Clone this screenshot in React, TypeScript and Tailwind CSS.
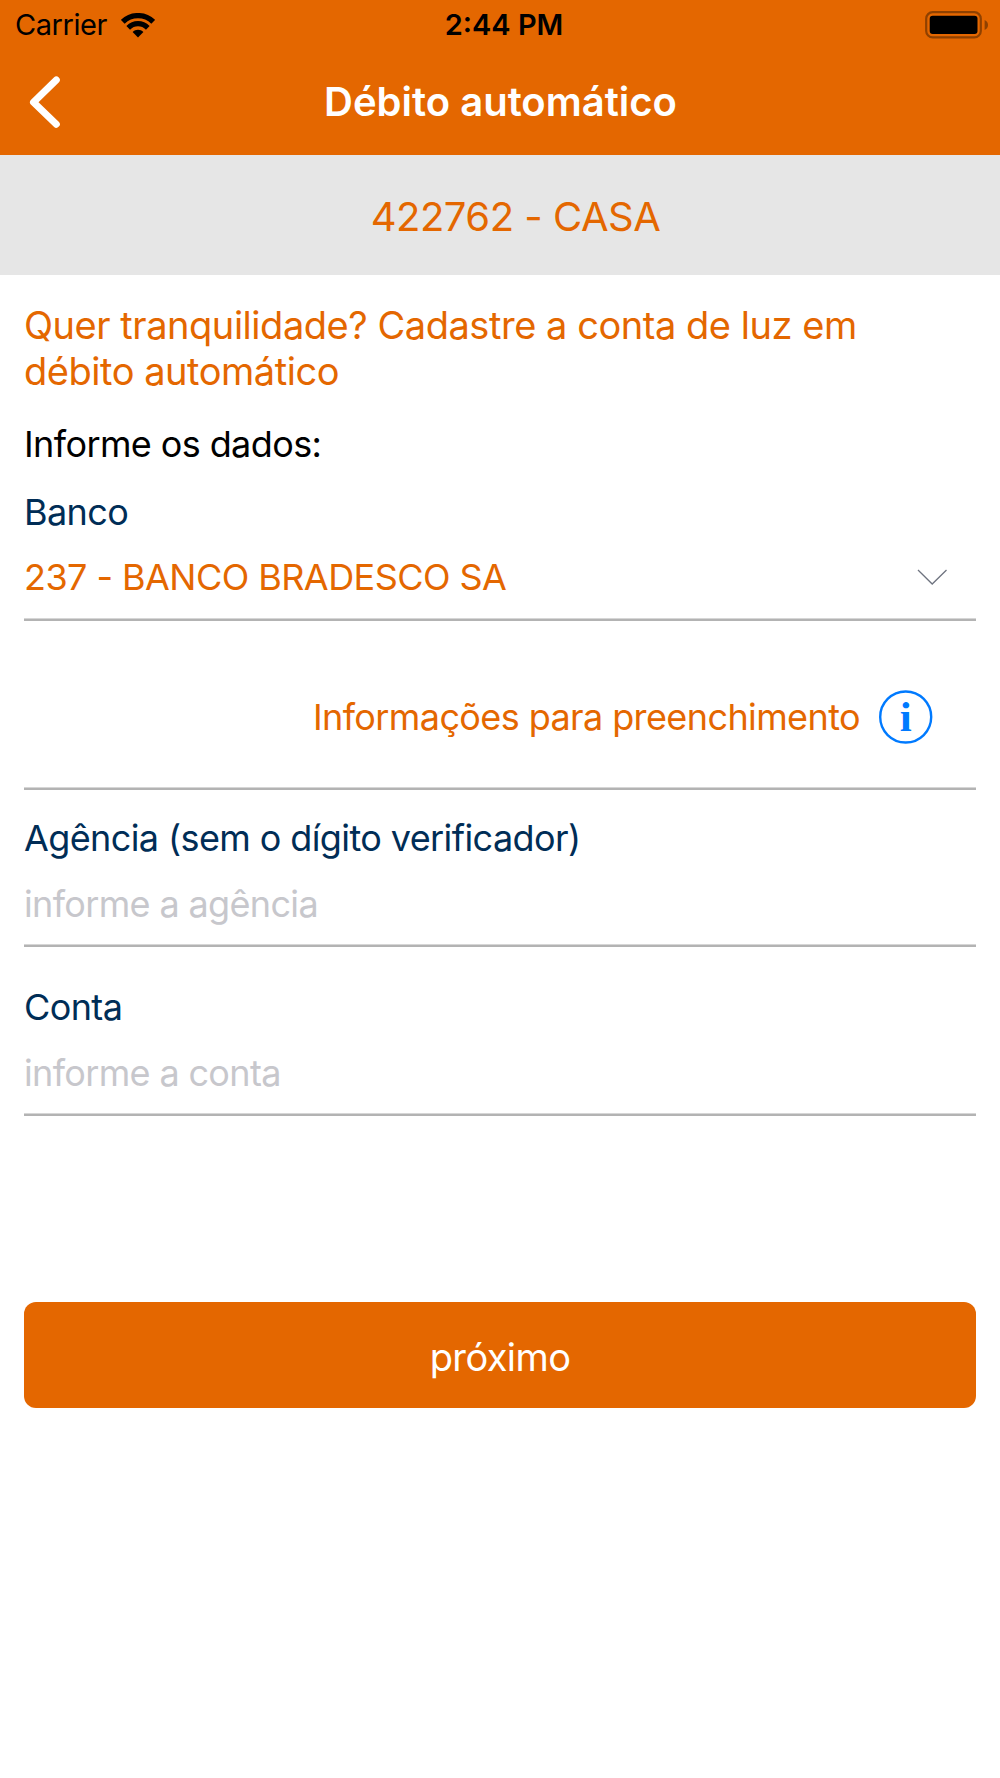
import { InputHTMLAttributes, ReactNode } from 'react';

type IFieldProps = {
    label: string;
    children: ReactNode;
};

const lineClass = 'border-b-2 border-[#b3b3b3] shadow-[inset_0_-1px_#d6d6d6]';

const WifiIcon = () => (
    <svg width="34" height="25" viewBox="0 0 34 25" fill="none">
        <path d="M1.8 8.8C10.3 0.6 23.7 0.6 32.2 8.8" stroke="#000" strokeWidth="5.4" />
        <path d="M7.2 14.8C12.8 9.3 21.2 9.3 26.8 14.8" stroke="#000" strokeWidth="5.2" />
        <path d="M17 24.4L11.6 19C14.6 16 19.4 16 22.4 19Z" fill="#000" />
    </svg>
);

const BatteryIcon = () => (
    <svg width="64" height="28" viewBox="0 0 64 28" fill="none">
        <rect x="1.2" y="1.2" width="54.6" height="25.2" rx="6.5" stroke="#8f4100" strokeWidth="2.2" />
        <rect x="4.7" y="4.8" width="47.8" height="18.2" rx="3" fill="#000" />
        <path d="M59.6 9C61.9 10 63 11.8 63 14C63 16.2 61.9 18 59.6 19Z" fill="#8f4100" />
    </svg>
);

const InfoIcon = () => (
    <svg width="54" height="54" viewBox="0 0 54 54" fill="none">
        <circle cx="26.7" cy="27" r="25.5" stroke="#007aff" strokeWidth="2.4" />
        <text
            x="26.4"
            y="41"
            textAnchor="middle"
            fill="#007aff"
            className="font-['Liberation_Serif',serif] text-[43px] font-bold"
        >
            i
        </text>
    </svg>
);

const Field = ({ label, children }: IFieldProps) => (
    <label className="block">
        <span className="block text-[36px] leading-[48px] text-[#002d56]">{label}</span>
        <div className={`flex h-[85px] items-center justify-between ${lineClass}`}>{children}</div>
    </label>
);

const TextInput = (props: InputHTMLAttributes<HTMLInputElement>) => (
    <input
        className="h-full w-full bg-transparent text-[36px] tracking-[-0.65px] outline-none placeholder:text-[#c7c7cc]"
        {...props}
    />
);

export default function App() {
    return (
        <div className="min-h-[1778px] w-[1000px] bg-white font-['Inter',sans-serif] text-black">
            <header className="h-[155px] bg-[#e46700]">
                <div className="grid h-[50px] grid-cols-3 items-center">
                    <div className="flex items-center gap-[14px] pl-[15px]">
                        <span className="text-[29px] leading-[50px] tracking-[-0.45px]">Carrier</span>
                        <WifiIcon />
                    </div>
                    <span className="pl-2 text-center text-[29px] leading-[50px] font-semibold">
                        2:44 PM
                    </span>
                    <div className="flex justify-end pr-[11px]">
                        <BatteryIcon />
                    </div>
                </div>
                <div className="grid h-[103px] grid-cols-[100px_1fr_100px] items-center">
                    <button className="pl-[29px]" aria-label="Voltar">
                        <svg width="32" height="52" viewBox="0 0 32 52" fill="none">
                            <path
                                d="M27.3 4L4.5 26.3L27.3 48.2"
                                stroke="#fff"
                                strokeWidth="7"
                                strokeLinecap="round"
                                strokeLinejoin="round"
                            />
                        </svg>
                    </button>
                    <h1 className="pl-px text-center text-[40px] leading-[103px] font-semibold text-white">
                        Débito automático
                    </h1>
                </div>
            </header>

            <div className="h-[120px] bg-[#e6e6e6] pt-[2px] pl-[31px] text-center text-[40px] leading-[120px] tracking-[-0.5px] text-[#e46700]">
                422762 - CASA
            </div>

            <main className="px-6 pt-[27px] tracking-[-0.6px]">
                <p className="text-[38px] leading-[46px] tracking-[-0.46px] text-[#e46700]">
                    Quer tranquilidade? Cadastre a conta de luz em
                    <br />
                    débito automático
                </p>
                <p className="mt-[26px] mb-5 text-[36px] leading-[48px]">Informe os dados:</p>

                <Field label="Banco">
                    <span className="pb-0.5 text-[36px] tracking-[-0.55px] text-[#e46700]">
                        237 - BANCO BRADESCO SA
                    </span>
                    <svg className="mr-[28px] mb-0.5" width="32" height="18" viewBox="0 0 32 18" fill="none">
                        <path d="M2 2L16.2 16L30.5 2" stroke="#6f7480" strokeWidth="1.3" />
                    </svg>
                </Field>

                <div
                    className={`flex h-[169px] items-center justify-end gap-[19px] pt-6 pr-[43px] ${lineClass}`}
                >
                    <span className="text-[36px] text-[#e46700]">Informações para preenchimento</span>
                    <InfoIcon />
                </div>

                <div className="mt-6 flex flex-col gap-9">
                    <Field label="Agência (sem o dígito verificador)">
                        <TextInput placeholder="informe a agência" />
                    </Field>
                    <Field label="Conta">
                        <TextInput placeholder="informe a conta" />
                    </Field>
                </div>

                <button className="mt-[186px] h-[106px] w-full rounded-[12px] bg-[#e46700] pt-[4px] text-[38px] text-white">
                    próximo
                </button>
            </main>
        </div>
    );
}
